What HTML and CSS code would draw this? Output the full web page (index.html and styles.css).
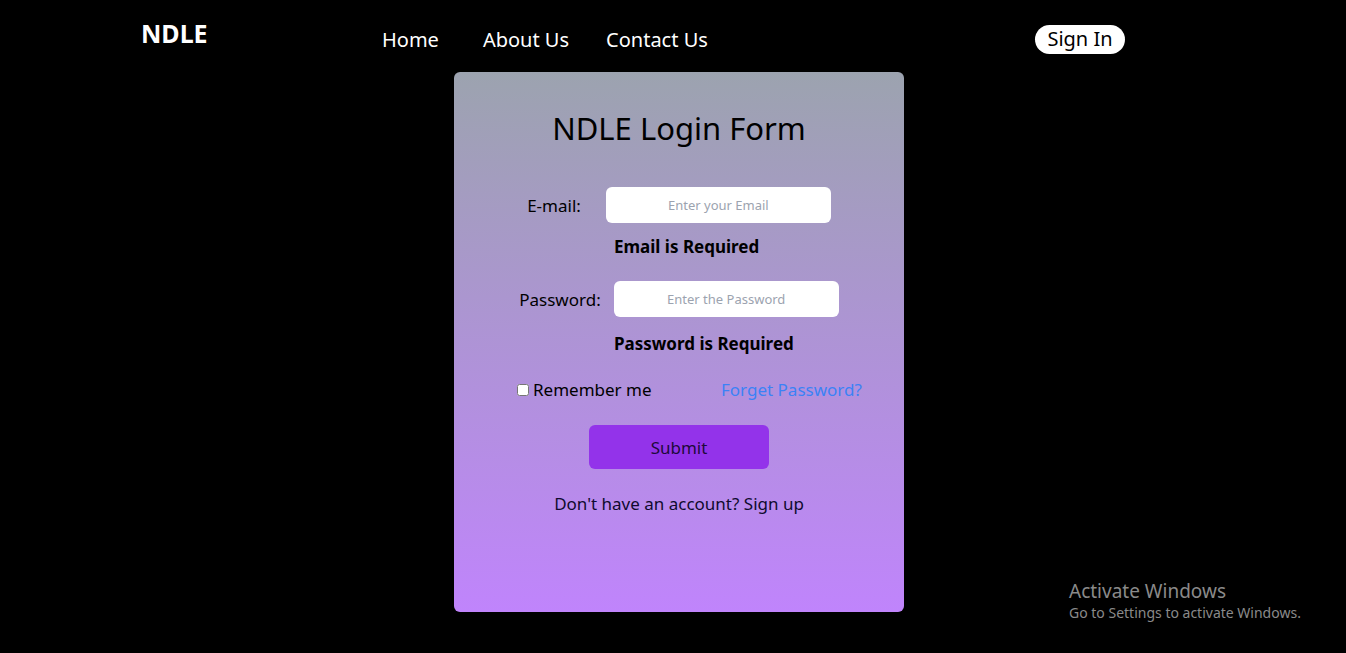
FILE: index.html
```html
<!DOCTYPE html>
<html lang="en">
<head>
<meta charset="utf-8">
<title>NDLE Login</title>
<link rel="stylesheet" href="styles.css">
</head>
<body>
<header class="topbar">
  <div class="logo">NDLE</div>
  <nav class="nav">
    <a href="#" class="nav-link">Home</a>
    <a href="#" class="nav-link">About Us</a>
    <a href="#" class="nav-link">Contact Us</a>
  </nav>
  <button class="signin">Sign In</button>
</header>
<main class="page">
  <form class="card">
    <h1 class="title">NDLE Login Form</h1>
    <div class="field field-email">
      <label class="label" for="email">E-mail:</label>
      <input class="input" id="email" type="email" placeholder="Enter your Email">
    </div>
    <p class="error error-email">Email is Required</p>
    <div class="field field-pass">
      <label class="label" for="pass">Password:</label>
      <input class="input" id="pass" type="password" placeholder="Enter the Password">
    </div>
    <p class="error error-pass">Password is Required</p>
    <div class="options">
      <label class="remember"><input type="checkbox" class="check">Remember me</label>
      <a href="#" class="forgot">Forget Password?</a>
    </div>
    <button type="button" class="submit">Submit</button>
    <p class="signup">Don't have an account? Sign up</p>
  </form>
</main>
<div class="watermark">
  <div class="wm-title">Activate Windows</div>
  <div class="wm-sub">Go to Settings to activate Windows.</div>
</div>
</body>
</html>
```
FILE: styles.css
```css
* { box-sizing: border-box; }
html, body { margin: 0; padding: 0; }
body {
  background: #000;
  font-family: "Noto Sans", "Open Sans", sans-serif;
  color: #000;
  height: 653px;
  overflow: hidden;
}
.topbar {
  display: flex;
  align-items: center;
  height: 72px;
  padding-left: 141px;
  padding-top: 7px;
}
.logo {
  color: #fff;
  font-weight: 700;
  font-size: 25px;
  line-height: 1;
  margin-top: -13px;
  width: 241px;
}
.nav {
  display: flex;
  gap: 37px;
  width: 653px;
}
.nav-link {
  color: #fff;
  text-decoration: none;
  font-size: 20px;
  line-height: 1;
}
.nav-link:first-child { margin-right: 7px; }
.signin {
  background: #fff;
  color: #000;
  border: none;
  border-radius: 15px;
  font-family: inherit;
  font-size: 20px;
  height: 29px;
  width: 90px;
  padding: 0;
  line-height: 1;
  margin-top: -1px;
}
.page {
  display: flex;
  justify-content: center;
  padding-left: 12px;
}
.card {
  width: 450px;
  height: 540px;
  border-radius: 6px;
  background: linear-gradient(to bottom, #9ca3af, #c084fc);
  display: flex;
  flex-direction: column;
  align-items: center;
  padding-top: 36px;
}
.title {
  margin: 0;
  font-weight: 400;
  font-size: 31px;
  line-height: 40px;
}
.field {
  display: flex;
  align-items: center;
  gap: 15px;
}
.field-email { margin-top: 39px; gap: 25px; }
.field-pass { margin-top: 23px; gap: 13px; }
.label {
  font-size: 17px;
}
.input {
  width: 225px;
  height: 36px;
  border: none;
  border-radius: 6px;
  background: #fff;
  text-align: center;
  font-family: inherit;
  font-size: 13px;
  outline: none;
}
.input::placeholder { color: #9ca3af; }
.error {
  align-self: flex-start;
  margin: 13px 0 0 160px;
  font-weight: 700;
  font-size: 17px;
  line-height: 22px;
}
.error-pass { margin-top: 16px; }
.options {
  align-self: stretch;
  display: flex;
  align-items: center;
  padding-left: 63px;
  margin-top: 23px;
  font-size: 17px;
  line-height: 24px;
}
.remember {
  display: flex;
  align-items: center;
  gap: 4px;
  width: 204px;
}
.check {
  margin: 0;
  width: 12px;
  height: 12px;
}
.forgot {
  color: #3b82f6;
  text-decoration: none;
}
.submit {
  margin-top: 23px;
  width: 180px;
  height: 44px;
  border: none;
  border-radius: 6px;
  background: #9333ea;
  color: #1e0a3a;
  font-family: inherit;
  font-size: 17px;
}
.signup {
  margin: 23px 0 0;
  font-size: 17px;
  line-height: 24px;
  color: #0f0a2e;
}
.watermark {
  position: absolute;
  left: 1069px;
  top: 578px;
  color: #8a8a8a;
}
.wm-title { font-size: 19px; line-height: 26px; }
.wm-sub { font-size: 14px; line-height: 18px; }
```
